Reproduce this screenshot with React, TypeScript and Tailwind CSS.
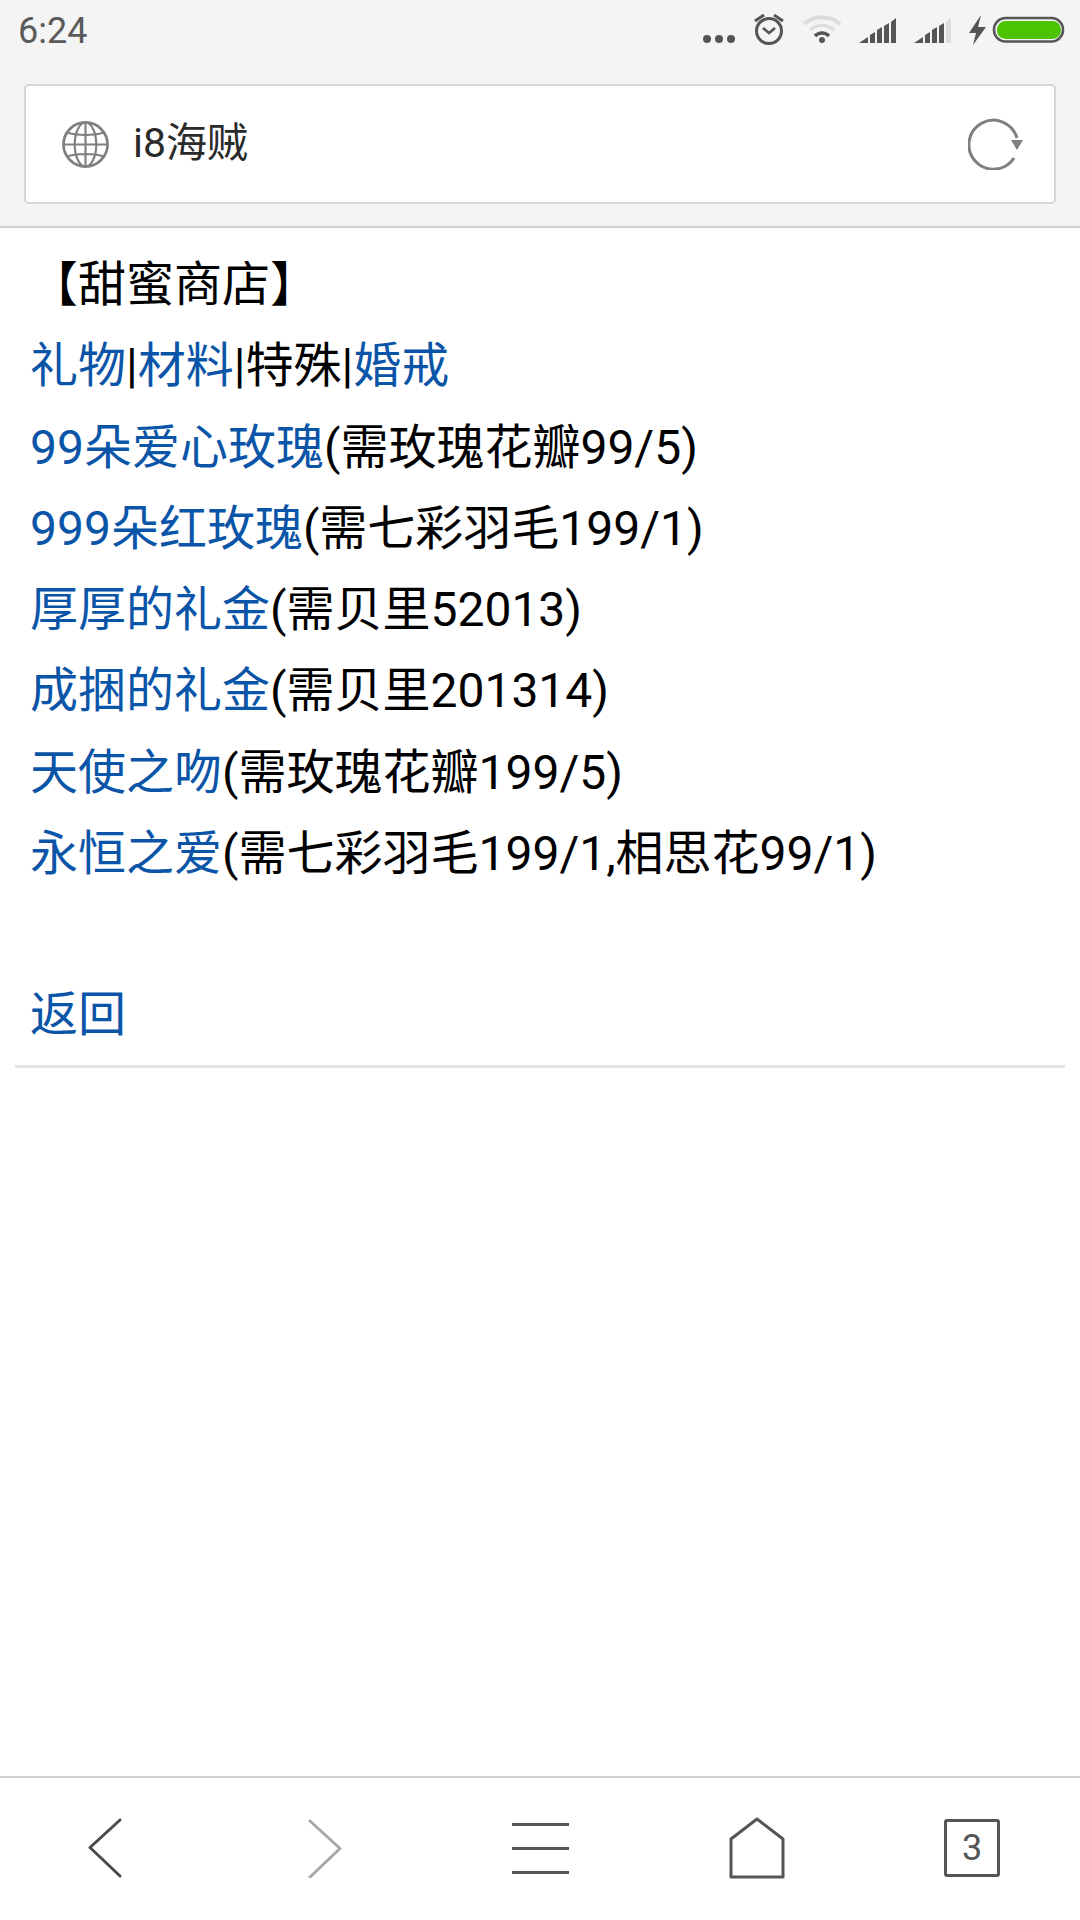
const FONT = "font-['Roboto','Noto_Sans_CJK_SC',sans-serif]"

const rows = [
  ['99朵爱心玫瑰', '(需玫瑰花瓣99/5)'],
  ['999朵红玫瑰', '(需七彩羽毛199/1)'],
  ['厚厚的礼金', '(需贝里52013)'],
  ['成捆的礼金', '(需贝里201314)'],
  ['天使之吻', '(需玫瑰花瓣199/5)'],
  ['永恒之爱', '(需七彩羽毛199/1,相思花99/1)'],
]

function StatusIcons() {
  return (
    <svg width="400" height="50" viewBox="0 0 400 50" className="block">
      {/* dots */}
      <circle cx="27" cy="39" r="4" fill="#555" />
      <circle cx="39" cy="39" r="4" fill="#555" />
      <circle cx="51" cy="39" r="4" fill="#555" />
      {/* alarm */}
      <g fill="none" stroke="#555">
        <circle cx="89" cy="31" r="12.5" strokeWidth="3" />
        <path d="M83 28l6 5 6-5" strokeWidth="2.5" />
        <path d="M75 21l9-6M103 21l-9-6" strokeWidth="3" />
      </g>
      {/* wifi */}
      <g fill="none">
        <path d="M124 24c10-9 26-9 36 0" stroke="#dcdcdc" strokeWidth="4" />
        <path d="M130 30c7-6 17-6 24 0" stroke="#dcdcdc" strokeWidth="3" />
        <path d="M135 36c4-4 10-4 14 0" stroke="#555" strokeWidth="3.5" />
      </g>
      <circle cx="142" cy="40" r="3" fill="#555" />
      {/* sim 1 */}
      <g fill="#555" transform="translate(3 0)">
        <polygon points="176,43 185,37 185,43" />
        <polygon points="187,43 187,35 192,32 192,43" />
        <polygon points="194,43 194,30 199,27 199,43" />
        <polygon points="201,43 201,26 206,23 206,43" />
        <polygon points="208,43 208,22 213,18 213,43" />
      </g>
      {/* sim 2 */}
      <g fill="#555" transform="translate(3 0)">
        <polygon points="231,43 240,37 240,43" />
        <polygon points="242,43 242,35 247,32 247,43" />
        <polygon points="249,43 249,30 254,27 254,43" />
        <polygon points="256,43 256,26 261,23 261,43" />
      </g>
      <polygon points="266,43 266,22 271,18 271,43" fill="#dcdcdc" />
      {/* charging bolt */}
      <polygon points="301,15 289,33 296,33 293,45 306,27 298,27" fill="#555" />
      {/* battery */}
      <rect x="314" y="18" width="69" height="23.5" rx="11.5" fill="none" stroke="#555" strokeWidth="2.5" />
      <rect x="317" y="21" width="64" height="18" rx="8.5" fill="#4cc300" />
    </svg>
  )
}

function Globe() {
  return (
    <svg width="47" height="47" viewBox="0 0 48 48" fill="none" stroke="#808080" className="shrink-0">
      <circle cx="24" cy="24" r="22.5" strokeWidth="2.8" />
      <ellipse cx="24" cy="24" rx="11" ry="22.5" strokeWidth="2.2" />
      <path d="M24 2v44M2 24h44M6 12c10 3 26 3 36 0M6 36c10-3 26-3 36 0" strokeWidth="2.2" />
    </svg>
  )
}

function Reload() {
  return (
    <svg width="56" height="52" viewBox="0 0 56 52" fill="none" className="shrink-0">
      <path d="M46 40A24.5 24.5 0 1 1 49 20" stroke="#808080" strokeWidth="3" />
      <polygon points="43,22 55,22 49,32" fill="#808080" />
    </svg>
  )
}

export default function App() {
  return (
    <div className={`${FONT} w-[1080px] h-[1920px] bg-white flex flex-col overflow-hidden text-[48px] text-black`}>
      <header className="h-[228px] shrink-0 bg-[#f4f4f4] border-b-2 border-[#d0d0d0] flex flex-col">
        <div className="h-[84px] shrink-0 flex items-start justify-between">
          <span className="pl-[18px] pt-[11px] text-[36px] leading-[40px] text-[#5a5a5a]">6:24</span>
          <StatusIcons />
        </div>
        <div className="mx-6 h-[120px] bg-white border-2 border-[#d6d6d6] rounded-[5px] flex items-center pl-[36px] pr-[30px]">
          <Globe />
          <span className="ml-[24px] flex-1 text-[41px] text-[#2a2a2a]">i8海贼</span>
          <Reload />
        </div>
      </header>

      <main className="flex-1 px-[15px] pt-4">
        <div className="px-[15px] leading-[81.3px]">
          <div>【甜蜜商店】</div>
          <div>
            <a className="text-[#0a55a8]">礼物</a>|<a className="text-[#0a55a8]">材料</a>|特殊|<a className="text-[#0a55a8]">婚戒</a>
          </div>
          {rows.map(([link, note]) => (
            <div key={link}>
              <a className="text-[#0a55a8]">{link}</a>
              {note}
            </div>
          ))}
          <div className="h-[80px]" />
          <a className="text-[#0a55a8]">返回</a>
        </div>
        <div className="mt-[9px] h-[3px] bg-[#e2e4e8]" />
      </main>

      <nav className="h-[144px] shrink-0 border-t-2 border-[#d0d0d0] bg-white flex items-center pl-[88px] pb-[2px]">
        <svg width="34" height="60" viewBox="0 0 34 60" fill="none" stroke="#4a4a4a" strokeWidth="3" strokeLinecap="round" strokeLinejoin="round">
          <path d="M32 2L2 29.5 32 58" />
        </svg>
        <svg width="34" height="60" viewBox="0 0 34 60" fill="none" stroke="#a8a8a8" strokeWidth="3" strokeLinecap="round" strokeLinejoin="round" className="ml-[186px]">
          <path d="M2 3l30 27.5L2 59" />
        </svg>
        <div className="ml-[170px] w-[57px] flex flex-col gap-[21px]">
          <div className="h-[3px] bg-[#555]" />
          <div className="h-[3px] bg-[#555]" />
          <div className="h-[3px] bg-[#555]" />
        </div>
        <svg width="56" height="62" viewBox="0 0 56 62" fill="none" stroke="#555" strokeWidth="3" strokeLinejoin="round" className="ml-[160px]">
          <path d="M2 22L28 2l26 20v38H2z" />
        </svg>
        <div className="ml-[159px] w-[56px] h-[58px] border-[3px] border-[#555] rounded-[3px] flex items-center justify-center text-[36px] text-[#555]">
          3
        </div>
      </nav>
    </div>
  )
}
